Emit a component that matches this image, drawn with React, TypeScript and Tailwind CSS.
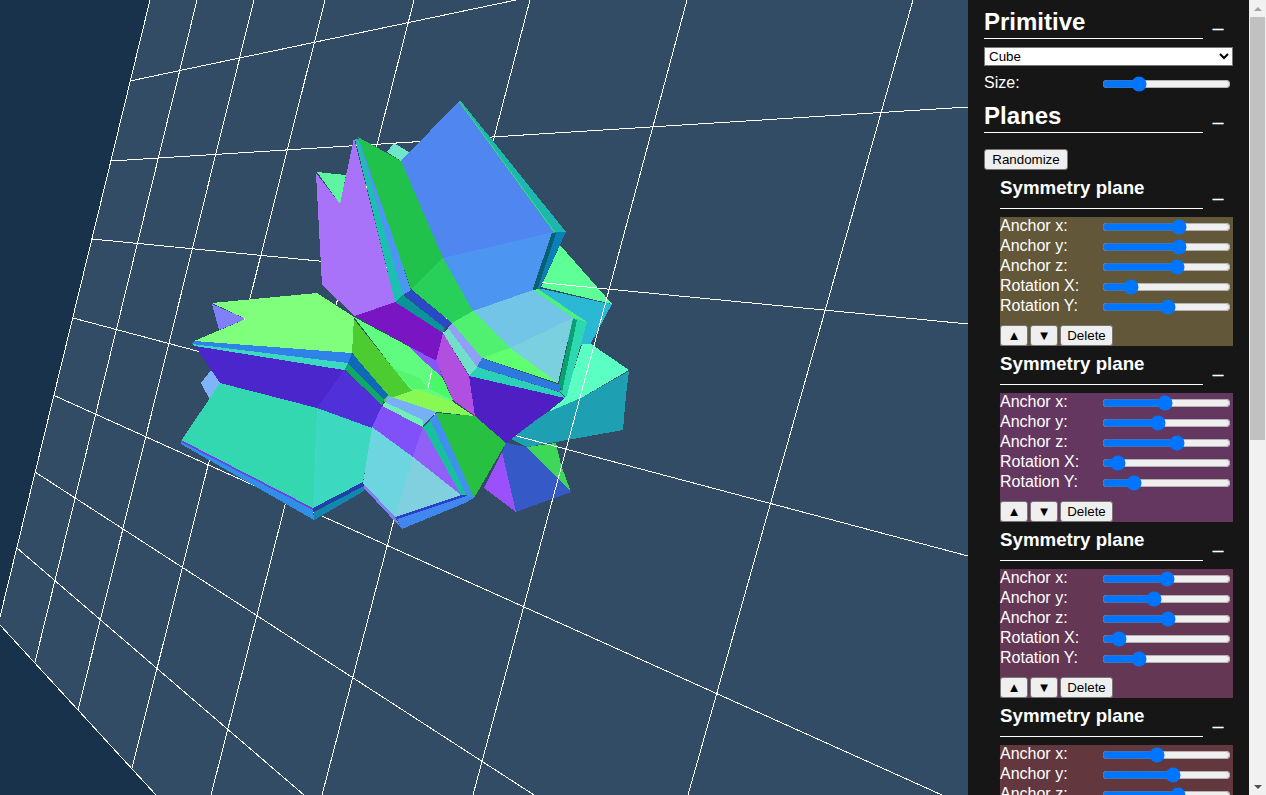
import React from 'react';

type Poly = [string, string];

const gridLines: [number, number, number, number][] = [
  [130, 81, 516, 0],
  [111, 161, 968, 107],
  [92, 239, 968, 324],
  [73, 318, 968, 556],
  [53, 395, 942, 795],
  [35, 472, 534, 795],
  [17, 548, 304, 795],
  [150, 0, 0, 617],
  [197, 0, 35, 662],
  [254, 0, 78, 710],
  [325, 0, 132, 768],
  [414, 0, 211, 795],
  [530, 0, 322, 795],
  [687, 0, 473, 795],
  [913, 0, 688, 795],
  [0, 625, 156, 795],
];

// faces that sit behind the grid lines
const backFaces: Poly[] = [
  ['#6fe6c8', '387,152 394,143 409,152 401,161'],
  ['#80b4f8', '201,383 211,370 221,383 210,400'],
  ['#8080fc', '212,304 246,319 219,330'],
  ['#5fff98', '560,245 612,304 541,287'],
  ['#2bb8d4', '538,288 605,303 612,304 590,345 570,345 540,292'],
  ['#5bffc4', '582,344 591,344 629,370 581,398 548,412 565,398'],
  ['#1ea0b2', '629,371 626,395 623,430 556,442 527,447 509,438 548,412 581,398'],
  ['#355ac8', '506,443 527,447 571,492 516,512 502,452'],
  ['#3ed858', '527,447 556,443 561,465 571,492'],
  ['#9b50fc', '502,452 516,512 484,488'],
];

// everything else, painted back to front
const frontFaces: Poly[] = [
  ['#a873f8', '316,173 340,204 354,138 395,302 355,316 322,285'],
  ['#5ff5a0', '317,172 346,175 340,204'],
  ['#1cc0b0', '355,139 358,139 403,294 395,302'],
  ['#4c95f0', '358,139 360,139 411,290 403,295'],
  ['#21c24c', '358,137 401,161 443,258 411,289'],
  ['#28cf58', '443,258 473,311 452,323 411,289'],
  ['#4f86f0', '459,101 554,232 443,258 401,161'],
  ['#1cb8b0', '459,101 460,100 566,232 554,233'],
  ['#40e060', '459,102 460,102 555,232 554,232'],
  ['#4c95f0', '443,258 554,232 533,290 473,311'],
  ['#0a80b8', '555,232 566,232 538,292 532,291'],
  ['#0a6070', '552,233 556,233 537,291 532,291'],
  ['#2a48c8', '411,290 452,323 445,328 404,295'],
  ['#0a9398', '403,295 445,328 443,333 395,302'],
  ['#7a15c4', '355,316 395,302 443,333 436,361'],
  ['#73c5e8', '473,311 533,290 573,318 510,348'],
  ['#7bd0e0', '573,318 558,383 510,348'],
  ['#50f070', '473,311 510,348 482,358 452,323'],
  ['#60ff70', '510,348 558,383 482,358'],
  ['#50f080', '533,290 538,289 587,322 573,318'],
  ['#2bd8b0', '587,322 566,398 560,392 577,319'],
  ['#0aa070', '573,319 577,320 562,392 559,383'],
  ['#2e78e0', '482,358 560,385 560,392 477,367'],
  ['#2ad0b8', '477,367 559,392 565,398 469,376'],
  ['#90a0f8', '452,323 482,358 477,367 448,328'],
  ['#70e0c8', '448,328 477,367 469,375 443,333'],
  ['#60fc80', '410,347 442,377 453,402 388,399'],
  ['#b04fe0', '443,333 469,376 475,416 453,400 436,361'],
  ['#4f1fc4', '469,376 565,398 506,443 475,416'],
  ['#8a55f8', '410,347 437,361 442,377 420,358'],
  ['#60fc80', '354,317 410,347 432,370 428,389 410,392 393,368'],
  ['#4af868', '432,370 442,377 453,400 429,389'],
  ['#55f570', '393,368 412,389 428,389 420,378'],
  ['#4ccc30', '353,318 393,368 412,391 385,403 352,352'],
  ['#1068b8', '352,353 388,395 384,400 347,362'],
  ['#10a868', '347,362 384,400 382,405 344,369'],
  ['#80ff7c', '212,303 317,293 354,317 352,353 194,341 246,319'],
  ['#2e82e8', '194,341 352,353 348,363 192,344'],
  ['#3dd8c0', '192,344 348,363 344,371 195,347'],
  ['#4a26cc', '195,346 344,370 317,408 220,383'],
  ['#5030d8', '344,370 382,405 372,428 317,408'],
  ['#88f855', '388,399 417,389 453,402 474,416 437,412'],
  ['#78b0f8', '388,396 437,412 423,425 385,403'],
  ['#70f0b8', '385,402 423,420 423,427 382,407'],
  ['#8050f8', '382,406 423,427 413,457 372,427'],
  ['#9060f8', '423,427 461,495 413,457'],
  ['#6dd5e0', '372,427 413,457 395,517 363,483'],
  ['#80d0e0', '413,457 461,495 395,517'],
  ['#2a40c8', '395,517 461,495 467,496 397,519'],
  ['#4088f0', '397,519 467,496 474,498 465,503 402,529'],
  ['#8080f8', '363,483 395,517 402,529 363,487'],
  ['#18c0a0', '423,427 430,420 467,495 461,495'],
  ['#4090ee', '430,420 436,413 474,498 467,496'],
  ['#28c040', '436,413 475,416 506,443 474,498'],
  ['#33d8b0', '220,383 317,408 313,508 181,441'],
  ['#3cd8c0', '317,408 372,428 363,482 313,508'],
  ['#3090e8', '181,441 313,509 314,520 181,444'],
  ['#7040e8', '181,440 313,508 313,510 181,442'],
  ['#2040a8', '313,508 363,482 364,486 314,511'],
  ['#1088b0', '314,512 364,486 364,491 314,520'],
];

const Scene: React.FC = () => (
  <svg width="968" height="795" viewBox="0 0 968 795" className="block shrink-0" shapeRendering="crispEdges">
    <rect width="968" height="795" fill="#18324c" />
    <polygon points="150,0 968,0 968,795 156,795 0,625 0,617" fill="#334c65" />
    {backFaces.map(([fill, points]) => (
      <polygon key={points} points={points} fill={fill} />
    ))}
    {gridLines.map(([x1, y1, x2, y2]) => (
      <line key={`${x1}-${y1}`} x1={x1} y1={y1} x2={x2} y2={y2} stroke="#ffffff" strokeWidth="1" />
    ))}
    {frontFaces.map(([fill, points]) => (
      <polygon key={points} points={points} fill={fill} />
    ))}
    <line x1="432" y1="370" x2="428" y2="388" stroke="#ffffff" strokeWidth="1" />
  </svg>
);

const Row: React.FC<{ label: string; value: number }> = ({ label, value }) => (
  <div className="flex h-5 items-center">
    <span className="w-[102px] text-white -mt-[3px]">{label}</span>
    <input type="range" min={0} max={1000} defaultValue={value * 1000} className="w-[129px] h-4 accent-[#0075ff]" />
  </div>
);

const Heading: React.FC<{ title: string; small?: boolean }> = ({ title, small }) => (
  <div className="flex h-[39px]">
    <h2
      className={
        small
          ? 'w-[203px] border-b border-white pt-[7px] text-[18.72px] leading-[22px] font-bold text-white'
          : 'w-[219px] border-b border-white text-[24px] leading-[28px] pt-[8px] font-bold text-white'
      }
    >
      {title}
    </h2>
    <button className="ml-[10px] h-full w-[10px] text-[18px] leading-[44px] font-bold text-white [-webkit-text-stroke:0.7px_white]">
      _
    </button>
  </div>
);

const labels = ['Anchor x:', 'Anchor y:', 'Anchor z:', 'Rotation X:', 'Rotation Y:'];

const planes = [
  { bg: 'bg-[#63573a]', values: [0.609, 0.609, 0.594, 0.186, 0.513] },
  { bg: 'bg-[#643760]', values: [0.487, 0.425, 0.593, 0.071, 0.213] },
  { bg: 'bg-[#643754]', values: [0.505, 0.389, 0.513, 0.079, 0.257] },
  { bg: 'bg-[#63373e]', values: [0.416, 0.558, 0.602, 0.5, 0.5] },
];

const smallButton = 'h-[21px] rounded-[3px] border border-[#767676] bg-[#efefef] text-[13.33px] leading-none text-black';

const App: React.FC = () => {
  return (
    <div className="flex h-screen w-full overflow-hidden bg-[#161616] font-['Liberation_Sans',Arial,sans-serif] text-[16px] leading-[18px]">
      <Scene />
      <div className="w-[281px] shrink-0 overflow-hidden pl-4 pr-4">
        <Heading title="Primitive" />
        <select className="mt-2 block h-[19px] w-[249px] border border-[#767676] bg-white text-[13.33px] leading-none text-black">
          <option>Cube</option>
        </select>
        <div className="mt-2 flex h-5 items-center">
          <span className="w-[118px] text-white -mt-[3px]">Size:</span>
          <input type="range" min={0} max={1000} defaultValue={257} className="w-[129px] h-4 accent-[#0075ff]" />
        </div>
        <Heading title="Planes" />
        <button className={`mt-[16px] block w-[84px] ${smallButton}`}>Randomize</button>
        <div className="pl-4">
          {planes.map((plane, i) => (
            <div key={i}>
              <div className="pb-[8px]">
                <Heading title="Symmetry plane" small />
              </div>
              <div className={`${plane.bg} h-[129px] w-[233px]`}>
                {labels.map((label, j) => (
                  <Row key={label} label={label} value={plane.values[j]} />
                ))}
                <div className="mt-2 flex gap-[2px]">
                  <button className={`w-[28px] ${smallButton}`}>▲</button>
                  <button className={`w-[28px] ${smallButton}`}>▼</button>
                  <button className={`w-[53px] ${smallButton}`}>Delete</button>
                </div>
              </div>
            </div>
          ))}
        </div>
      </div>
      <div className="flex w-[17px] shrink-0 flex-col bg-[#f1f1f1]">
        <div className="flex h-[17px] items-center justify-center">
          <div className="h-0 w-0 border-x-[4px] border-b-[4px] border-x-transparent border-b-[#a3a3a3]" />
        </div>
        <div className="mx-[1px] h-[423px] bg-[#c1c1c1]" />
        <div className="flex-1" />
        <div className="flex h-[17px] items-center justify-center">
          <div className="h-0 w-0 border-x-[4px] border-t-[4px] border-x-transparent border-t-[#505050]" />
        </div>
      </div>
    </div>
  );
};

export default App;
